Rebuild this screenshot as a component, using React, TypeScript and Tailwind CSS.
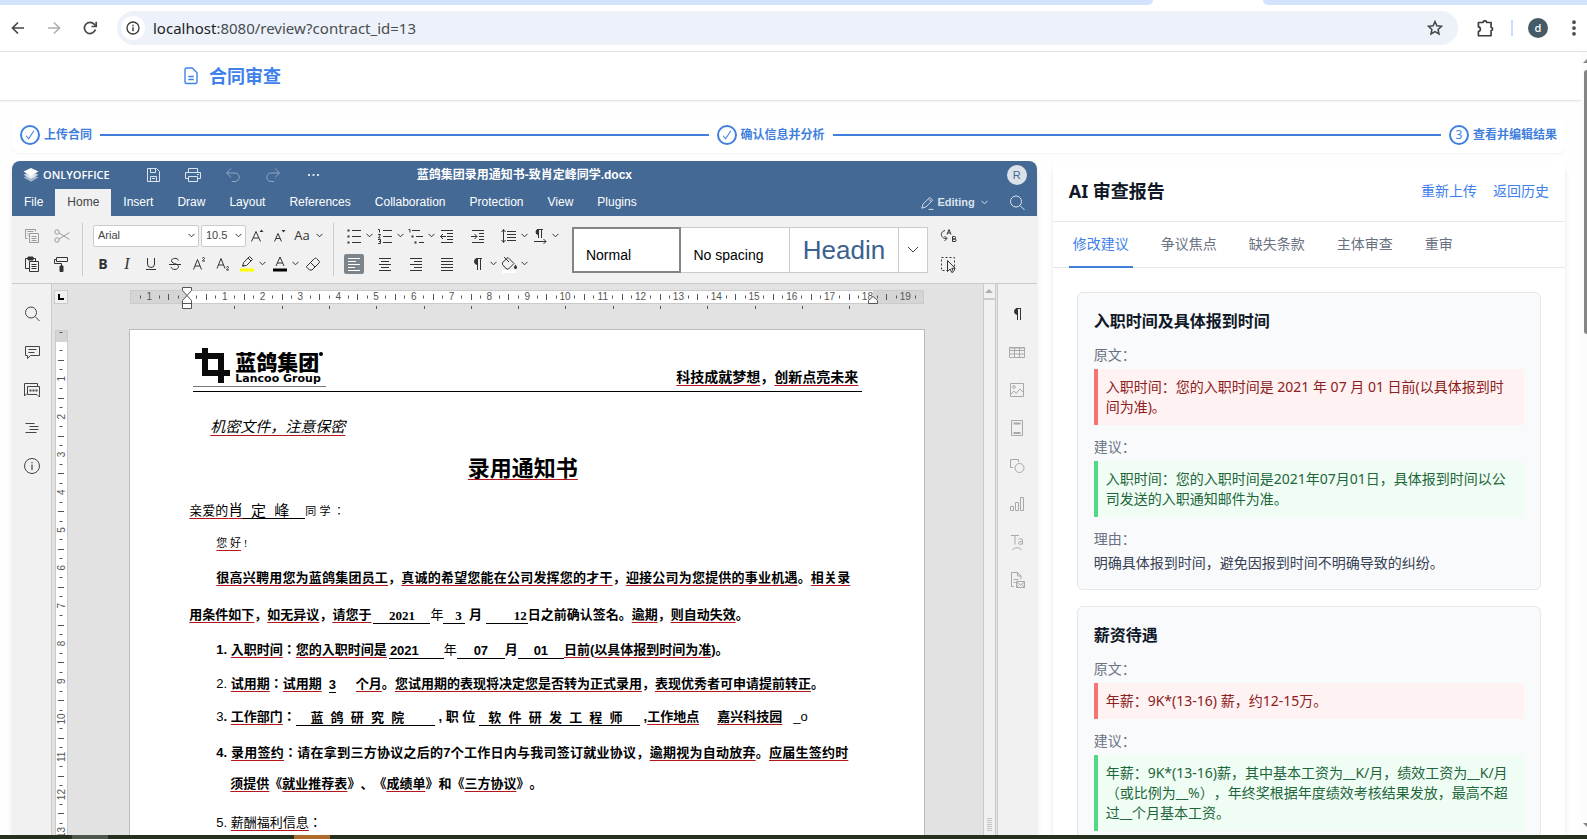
import type { ReactNode } from 'react';
import clsx from 'clsx';
import { MoreVertical } from 'lucide-react';

const UI_FONT = "font-['Noto_Sans','Noto_Sans_CJK_SC',sans-serif]";
const OFFICE_FONT = "font-['Liberation_Sans','Noto_Sans_CJK_SC',sans-serif]";

type IconProps = { children: ReactNode; className?: string; size?: number };

function Icon({ children, className, size = 20 }: IconProps) {
  return (
    <svg
      width={size}
      height={size}
      viewBox="0 0 20 20"
      fill="none"
      stroke="currentColor"
      strokeWidth="1"
      className={clsx('shrink-0', className)}
      aria-hidden="true"
    >
      {children}
    </svg>
  );
}

function Chevron() {
  return (
    <svg width="7" height="5" viewBox="0 0 7 5" fill="none" stroke="currentColor" aria-hidden="true">
      <path d="M.5.8l3 3 3-3" />
    </svg>
  );
}

/* ---------- browser chrome ---------- */

function BrowserBar() {
  return (
    <header className="border-b border-[#dfe1e5] bg-white">
      <div className="flex h-[5px]">
        <div className="flex-1 rounded-br-lg bg-[#d3e3fd]" />
        <div className="w-[110px]" />
        <div className="w-[324px] rounded-bl-lg bg-[#d3e3fd]" />
      </div>
      <div className="flex h-[46px] items-center pr-[3px] pl-2 text-[#474747]">
        <button type="button" aria-label="Back" className="flex w-5 justify-center">
          <Icon>
            <path d="M16 10H4.500M10 4.500L4.500 10l5.500 5.500" strokeWidth="1.700" />
          </Icon>
        </button>
        <button type="button" aria-label="Forward" className="ml-4 flex w-5 justify-center text-[#b0b0b0]">
          <Icon>
            <path d="M4 10h11.500M10 4.500l5.500 5.500-5.500 5.500" strokeWidth="1.700" />
          </Icon>
        </button>
        <button type="button" aria-label="Reload" className="mr-[17px] ml-4 flex w-5 justify-center">
          <Icon>
            <path d="M15.400 11.500A5.600 5.600 0 1 1 14.200 6.200l1.600 1.700" strokeWidth="1.700" />
            <path d="M16.200 3.800v4.700h-4.700" strokeWidth="1.700" />
          </Icon>
        </button>
        <div className="flex h-[34px] flex-1 items-center rounded-full bg-[#ecf1fa] px-1">
          <button type="button" aria-label="Site information" className="flex size-6 items-center justify-center rounded-full bg-white">
            <Icon size={16} className="text-[#3c3c3c]">
              <circle cx="10" cy="10" r="7.500" strokeWidth="1.700" />
              <path d="M10 9v5M10 6v1.800" strokeWidth="1.800" />
            </Icon>
          </button>
          <div className={clsx(UI_FONT, 'ml-2 flex-1 text-[15px] text-[#4a4d51]')}>
            <span className="text-[#1f1f1f]">localhost</span>:8080/review?contract_id=13
          </div>
          <button type="button" aria-label="Bookmark this page" className="mr-[9px]">
            <Icon className="text-[#444]">
              <path d="M10 3.600l1.900 4.200 4.600.5-3.400 3.100.9 4.600-4-2.300-4 2.300.9-4.600-3.400-3.100 4.600-.5z" strokeWidth="1.500" />
            </Icon>
          </button>
        </div>
        <button type="button" aria-label="Extensions" className="ml-4">
          <Icon size={22} className="text-[#3c3c3c]">
            <path
              d="M4 5h4.300c0-2 3.200-2 3.200 0H15.500v4.500c1.900 0 1.900 2.800 0 2.800V17H4v-3.800c2.400-.4 2.400-3.800 0-4.200z"
              strokeWidth="1.500"
              strokeLinejoin="round"
            />
          </Icon>
        </button>
        <span className="mx-[15px] h-4 w-0.5 bg-[#c9dcf9]" />
        <button type="button" className="flex size-5 items-center justify-center rounded-full bg-[#455a64] text-[11px] font-medium text-white">
          d
        </button>
        <button type="button" aria-label="Menu" className="ml-4">
          <MoreVertical size={20} strokeWidth={2.500} />
        </button>
      </div>
    </header>
  );
}

/* ---------- app header and steps ---------- */

function AppHeader() {
  return (
    <div className="flex h-[49px] items-center border-b border-[#e4e6ea] bg-white pl-[181px] shadow-xs">
      <Icon className="text-[#4080ea]">
        <path
          d="M5.500 2h5.800l4.700 4.700V16A1.500 1.500 0 0 1 14.500 17.500H5.500A1.500 1.500 0 0 1 4 16V3.500A1.500 1.500 0 0 1 5.500 2zM7.300 10.500h5.500M7.300 13.500h5.500"
          strokeWidth="1.400"
        />
      </Icon>
      <h1 className="ml-2 text-lg font-bold text-[#4080ea]">合同审查</h1>
    </div>
  );
}

function StepDot({ label, children }: { label: string; children: ReactNode }) {
  return (
    <li className="flex shrink-0 items-center gap-1">
      <span className="flex size-5 items-center justify-center rounded-full border-2 border-[#4080dc] text-xs">{children}</span>
      <span className="text-xs font-bold">{label}</span>
    </li>
  );
}

function Steps() {
  const check = (
    <Icon size={14}>
      <path d="M4.500 11l3.500 4.500L15.500 4" strokeWidth="1.500" />
    </Icon>
  );
  return (
    <ol className="mt-4 mb-2 flex h-9 items-center gap-2 rounded-lg bg-white px-2 text-[#4080dc] shadow-xs">
      <StepDot label="上传合同">{check}</StepDot>
      <li className="h-0.5 flex-1 bg-[#4080dc]" />
      <StepDot label="确认信息并分析">{check}</StepDot>
      <li className="h-0.5 flex-1 bg-[#4080dc]" />
      <StepDot label="查看并编辑结果">3</StepDot>
    </ol>
  );
}

/* ---------- editor: title bar and menu ---------- */

const MENU = ['File', 'Home', 'Insert', 'Draw', 'Layout', 'References', 'Collaboration', 'Protection', 'View', 'Plugins'];

function EditorTop() {
  return (
    <div className="bg-[#446995] text-white">
      <div className="grid h-7 grid-cols-[1fr_auto_1fr] items-center px-[10px]">
        <div className="flex items-center">
          <svg width="18" height="16" viewBox="0 0 18 16" aria-hidden="true">
            <path d="M9 7.200l7.500 3.300L9 14.800 1.500 10.500z" fill="#fff" fillOpacity=".5" />
            <path d="M9 4.600l7.500 3.200L9 11.800 1.500 7.800z" fill="#fff" fillOpacity=".75" />
            <path d="M9 1l7.500 3.600L9 8.800 1.500 4.600z" fill="#fff" />
          </svg>
          <span className="ml-[3px] w-[67px] font-['Open_Sans',sans-serif] text-[11px] font-semibold">ONLYOFFICE</span>
          <div className="ml-[33px] flex items-center gap-5 text-[#dbe3ee]">
            <button type="button" aria-label="Save">
              <Icon>
                <path d="M4.500 3.500h9l3 3v10h-12zM7.500 3.500v4h5v-4M7.500 16.500v-5h6v5M9 13.500h3" />
              </Icon>
            </button>
            <button type="button" aria-label="Print">
              <Icon>
                <path d="M5.500 7V3.500h9V7M5.500 13.500h-3V7.500h15v6h-3M5.500 11.500h9v5h-9zM14 9.500h2" />
              </Icon>
            </button>
            <button type="button" aria-label="Undo" className="opacity-50">
              <Icon>
                <path d="M8 3.500L3.500 8 8 12.500M4 8h8a4.200 4.200 0 0 1 0 8.500H9" />
              </Icon>
            </button>
            <button type="button" aria-label="Redo" className="opacity-50">
              <Icon>
                <path d="M12 3.500L16.500 8 12 12.500M16 8H8a4.200 4.200 0 0 0 0 8.500h3" />
              </Icon>
            </button>
            <button type="button" aria-label="More">
              <Icon>
                <path d="M5 10h2M9.500 10h2M14 10h2" strokeWidth="2" />
              </Icon>
            </button>
          </div>
        </div>
        <span className="text-xs font-bold">蓝鸽集团录用通知书-致肖定峰同学.docx</span>
        <span className="flex size-5 items-center justify-center justify-self-end rounded-full bg-[#dbe2ea] text-[11px] text-[#446995]">R</span>
      </div>
      <div className="flex h-[27px] text-xs">
        {MENU.map((item) => (
          <button
            key={item}
            type="button"
            className={clsx('px-3 pb-0.5', item === 'Home' ? 'bg-[#f1f1f1] text-[#444]' : 'font-medium text-white')}
          >
            {item}
          </button>
        ))}
        <div className="ml-auto flex items-center pr-[10px] text-[#dbe3ee]">
          <button type="button" className="flex items-center gap-0.5 text-[11px] font-bold">
            <Icon size={16}>
              <path d="M3.500 16.500l1.500-5L13.500 3l3.500 3.500-8.500 8.500zM12 5l3 3M12 18h6" strokeWidth="1.200" />
            </Icon>
            Editing
            <span className="ml-1">
              <Chevron />
            </span>
          </button>
          <button type="button" aria-label="Search" className="ml-[19px]">
            <Icon>
              <circle cx="9" cy="8.500" r="5.500" />
              <path d="M13 12.500l4.500 4.500" />
            </Icon>
          </button>
        </div>
      </div>
    </div>
  );
}

/* ---------- editor: toolbar ---------- */

type ToolProps = { label: string; children: ReactNode; menu?: boolean; wide?: boolean; active?: boolean; className?: string };

function Tool({ label, children, menu, wide, active, className }: ToolProps) {
  return (
    <span className={clsx('flex items-center', wide && 'pr-[11px]', className)}>
      <button
        type="button"
        aria-label={label}
        className={clsx('flex size-5 items-center justify-center rounded-xs', active && 'bg-[#7d858c] text-white')}
      >
        {children}
      </button>
      {menu && (
        <span className="flex w-[11px] justify-center">
          <Chevron />
        </span>
      )}
    </span>
  );
}

function FontTool({ label, children, className }: { label: string; children: ReactNode; className?: string }) {
  return (
    <button type="button" aria-label={label} className={clsx('flex h-5 items-center justify-center', className ?? 'w-6')}>
      {children}
    </button>
  );
}

function Picker({ label, value, className }: { label: string; value: string; className: string }) {
  return (
    <div className={clsx('relative', className)}>
      <select
        aria-label={label}
        defaultValue={value}
        className="block h-[22px] w-full appearance-none rounded-xs border border-[#cbcbcb] bg-white pl-1 text-[11px] text-[#444] outline-none"
      >
        <option>{value}</option>
      </select>
      <span className="pointer-events-none absolute inset-y-0 right-1 flex items-center">
        <Chevron />
      </span>
    </div>
  );
}

function Bar({ className }: { className?: string }) {
  return <span className={clsx('h-[53px] w-px shrink-0 bg-[#cbcbcb]', className)} />;
}

function Toolbar() {
  return (
    <div className="flex h-[68px] items-center border-b border-[#cbcbcb] bg-[#f1f1f1] pl-[10px] text-[#333]">
      <div className="grid grid-cols-[20px_20px] gap-x-[10px] gap-y-2">
        <Tool label="Copy">
          <Icon className="text-[#9a9a9a]">
            <path d="M5.500 12.500h-2v-9h10v2M5.500 5.500h6M5.500 7.500h1M5.500 9.500h1M7.500 7.500h9v9h-9zM9.500 10.500h5M9.500 12.500h5M9.500 14.500h5" />
          </Icon>
        </Tool>
        <Tool label="Cut">
          <Icon className="text-[#9a9a9a]">
            <circle cx="5" cy="6" r="2.200" />
            <circle cx="5" cy="14" r="2.200" />
            <path d="M7 7l10.500 6.500M7 13l10.500-6.500" />
          </Icon>
        </Tool>
        <Tool label="Paste">
          <Icon>
            <path d="M7 14.500H3.500v-10h10V7M7.500 7.500h9v10h-9zM9.500 10.500h5M9.500 12.500h5M9.500 14.500h5" />
            <path d="M6 3h5v3H6z" fill="currentColor" />
          </Icon>
        </Tool>
        <Tool label="Copy style">
          <Icon>
            <path d="M4.500 3.500h11v4h-11zM4.500 5.500h-2v4h7v3" />
            <path d="M8 12h3v5.500H8z" fill="currentColor" />
          </Icon>
        </Tool>
      </div>

      <Bar className="mr-[10px] ml-[10px]" />

      <div className="flex flex-col gap-2">
        <div className="flex h-5 items-center">
          <Picker label="Font" value="Arial" className="w-[106px]" />
          <Picker label="Font size" value="10.5" className="ml-0.5 w-[45px]" />
          <FontTool label="Increase font size" className="w-[22px]">
            <Icon>
              <path d="M4.500 15.500L9 5.500l4.500 10M6 12h6" />
              <path d="M12.500 6l2-2.500 2 2.500z" fill="currentColor" stroke="none" />
            </Icon>
          </FontTool>
          <FontTool label="Decrease font size" className="w-[22px]">
            <Icon>
              <path d="M5.500 15.500L9 7.500l3.500 8M6.800 12.500h4.500" />
              <path d="M12.500 4l2 2.500 2-2.500z" fill="currentColor" stroke="none" />
            </Icon>
          </FontTool>
          <FontTool label="Change case" className="w-6">
            <span className="font-['Open_Sans',sans-serif] text-[13px]">Aa</span>
          </FontTool>
          <span className="flex w-[11px] justify-center">
            <Chevron />
          </span>
        </div>
        <div className="-ml-0.5 flex h-5 items-center font-['Open_Sans',sans-serif] text-sm">
          <FontTool label="Bold">
            <b>B</b>
          </FontTool>
          <FontTool label="Italic">
            <i className="font-['Liberation_Serif',serif] text-base">I</i>
          </FontTool>
          <FontTool label="Underline">
            <Icon>
              <path d="M6.500 4v6a3.500 3.500 0 0 0 7 0V4M5 15.500h10" />
            </Icon>
          </FontTool>
          <FontTool label="Strikethrough">
            <Icon>
              <path d="M13.500 6.500c-.6-3-7-2.800-7 .3 0 2.200 3 2.500 4.500 3.200 1.800.8 2.500 1.500 2.500 2.700 0 3.500-6.800 3.700-7.500.3M4 10.500h12" />
            </Icon>
          </FontTool>
          <FontTool label="Superscript">
            <Icon>
              <path d="M4.500 15.500L8.500 5.500l4 10M6 12h5M13.500 4.500c0-1.300 2-1.300 2 0 0 .8-2 1.500-2 2.500H16" />
            </Icon>
          </FontTool>
          <FontTool label="Subscript">
            <Icon>
              <path d="M4 14.500L8 4.500l4 10M5.500 11h5M13.500 13.500c0-1.300 2-1.300 2 0 0 .8-2 1.500-2 2.500H16" />
            </Icon>
          </FontTool>
          <Tool label="Highlight color" menu className="ml-0.5">
            <Icon>
              <path d="M5.500 12l1.200-3.500L12.500 2.500l3 3L9.500 11.500zM11 4l3 3M5.500 12l2-.5" />
              <path d="M3 14.500h14V17.500H3z" fill="#ffff00" stroke="none" />
            </Icon>
          </Tool>
          <Tool label="Font color" menu className="ml-0.5">
            <Icon>
              <path d="M6 12L10 3l4 9M7.500 9h5" />
              <path d="M3 14.500h14V17.500H3z" fill="#000" stroke="none" />
            </Icon>
          </Tool>
          <Tool label="Clear style" className="ml-0.5">
            <Icon>
              <path d="M3.500 12.500L11.500 4.500c.6-.6 1.400-.6 2 0l2.500 2.500c.6.6.6 1.400 0 2L9 16H6.500l-3-3zM7.500 8.500l4.500 4.500" />
            </Icon>
          </Tool>
        </div>
      </div>

      <Bar className="mr-[10px] ml-2" />

      <div className="flex flex-col gap-2">
        <div className="flex h-5">
          <Tool label="Bullets" menu>
            <Icon>
              <path d="M8 4.500h9M8 10.500h9M8 16.500h9" />
              <path d="M3.500 3.500h2v2h-2zM3.500 9.500h2v2h-2zM3.500 15.500h2v2h-2z" fill="currentColor" stroke="none" />
            </Icon>
          </Tool>
          <Tool label="Numbering" menu>
            <Icon>
              <path d="M8 4.500h9M8 10.500h9M8 16.500h9M3 3.500h1.500v3M3 8.500h2.500L3.500 12h2M3 13.500h2.500v4H3M4 15.500h1.500" />
            </Icon>
          </Tool>
          <Tool label="Multilevel list" menu>
            <Icon>
              <path d="M6 4.500h8M10 10.500h7M13 16.500h5M2.500 3.500H4v3" />
              <path d="M5.500 9.500h2v2h-2zM8.500 15.500h2v2h-2z" fill="currentColor" stroke="none" />
            </Icon>
          </Tool>
          <Tool label="Decrease indent" wide>
            <Icon>
              <path d="M4 4.500h12M10 7.500h6M10 10.500h6M10 13.500h6M4 16.500h12M9 10.500H3.500M6 8l-2.500 2.500L6 13" />
            </Icon>
          </Tool>
          <Tool label="Increase indent" wide>
            <Icon>
              <path d="M4 4.500h12M11 7.500h5M11 10.500h5M11 13.500h5M4 16.500h12M3 10.500h6M6.500 8L9 10.500 6.500 13" />
            </Icon>
          </Tool>
          <Tool label="Line spacing" menu>
            <Icon>
              <path d="M8 5.500h9M8 8.500h9M8 11.500h9M8 14.500h9M4.500 4v12M2.500 6l2-2.500 2 2.500M2.500 14l2 2.500 2-2.500" />
            </Icon>
          </Tool>
          <Tool label="Text direction" menu>
            <Icon>
              <path d="M8.500 12V3.500M11.500 12V3.500M7 3.500h6M4 15.500h12M13.500 13l2.500 2.500L13.500 18" />
              <path d="M8.500 3.500a2.500 2.500 0 0 0 0 5z" fill="currentColor" />
            </Icon>
          </Tool>
        </div>
        <div className="flex h-5">
          <Tool label="Align left" wide active>
            <Icon>
              <path d="M4 4.500h12M4 7.500h8M4 10.500h12M4 13.500h7M4 16.500h12" />
            </Icon>
          </Tool>
          <Tool label="Align center" wide>
            <Icon>
              <path d="M4 4.500h12M6 7.500h8M4 10.500h12M6 13.500h8M4 16.500h12" />
            </Icon>
          </Tool>
          <Tool label="Align right" wide>
            <Icon>
              <path d="M4 4.500h12M8 7.500h8M4 10.500h12M8 13.500h8M4 16.500h12" />
            </Icon>
          </Tool>
          <Tool label="Justified" wide>
            <Icon>
              <path d="M4 4.500h12M4 7.500h12M4 10.500h12M4 13.500h12M4 16.500h12" />
            </Icon>
          </Tool>
          <Tool label="Nonprinting characters" menu>
            <Icon>
              <path d="M9.500 16V4.500M12.500 16V4.500M8 4.500h6" />
              <path d="M9.500 4.500a3 3 0 0 0 0 6z" fill="currentColor" />
            </Icon>
          </Tool>
          <Tool label="Shading" menu>
            <Icon>
              <path d="M3.500 8.500l5.500-5 6 6-5.500 5.500h-2l-4-4.500zM5 3l5 5" />
              <path d="M16.500 10.500c1 1.500 1.500 2 1.500 3a1.500 1.500 0 0 1-3 0c0-1 .5-1.500 1.500-3z" fill="currentColor" stroke="none" />
              <path d="M3 16h14v3H3z" fill="#fff" stroke="none" />
            </Icon>
          </Tool>
        </div>
      </div>

      <div className="ml-[11px] flex h-[46px] border border-[#cbcbcb] bg-white text-sm text-black">
        <button type="button" className="-m-px w-[109px] border-2 border-[#848484] pt-2.5 pr-9 text-center">
          Normal
        </button>
        <button type="button" className="w-[110px] border-r border-[#cbcbcb] pt-2.5 pr-3">
          No spacing
        </button>
        <button type="button" className="w-[109px] border-r border-[#cbcbcb] pt-0.5 text-[26px] text-[#3a6190]">
          Headin
        </button>
        <button type="button" aria-label="More styles" className="flex w-7 items-center justify-center text-[#444]">
          <svg width="12" height="7" viewBox="0 0 12 7" fill="none" stroke="currentColor" aria-hidden="true">
            <path d="M1 1l5 5 5-5" />
          </svg>
        </button>
      </div>

      <div className="ml-[10px] flex flex-col gap-2">
        <Tool label="Replace">
          <Icon>
            <path d="M7 4.500C3.500 5.500 2.500 8 4 10.500c.8 1.200 2 2 4.500 2M6.500 10l2.500 2.500L6.500 15" />
            <path d="M9 8.500L11 3.500l2 5M9.800 7h2.500" />
            <path d="M14.500 10.500h2c1.500 0 1.500 2.500 0 2.500h-2zM14.500 13h2.500c1.500 0 1.500 2.500 0 2.500h-2.500z" />
          </Icon>
        </Tool>
        <Tool label="Select all">
          <Icon>
            <path d="M3.500 3.500h13v13h-13z" strokeDasharray="2 2" />
            <path d="M9.500 6.500v11l2.500-2.500 1.800 3.500 1.700-.8-1.700-3.400h3.400z" fill="#f1f1f1" />
          </Icon>
        </Tool>
      </div>
    </div>
  );
}

/* ---------- editor: side panels ---------- */

const LEFT_PANEL = [
  {
    label: 'Find',
    icon: (
      <>
        <circle cx="9" cy="8.500" r="5.500" />
        <path d="M13 12.500l4.500 4.500" />
      </>
    ),
  },
  { label: 'Comments', icon: <path d="M3.500 4.500h14v9h-9l-3 3v-3h-2zM6.500 7.500h8M6.500 10.500h6" /> },
  {
    label: 'Chat',
    icon: (
      <>
        <path d="M5 13.500l-2.500 2.500V3.500h13V6M5.500 6.500h12v8H17.500v2.500l-2.500-2.500h-9.500z" />
        <path d="M7.500 10.500h2M10.500 10.500h2M13.500 10.500h2" strokeWidth="2" />
      </>
    ),
  },
  { label: 'Headings', icon: <path d="M3.500 5.500h9M7.500 8.500h9M7.500 11.500h9M3.500 14.500h11" /> },
  {
    label: 'About',
    icon: (
      <>
        <circle cx="10" cy="10" r="7.500" />
        <path d="M10 8.500V14M10 6v1.200" strokeWidth="1.200" />
      </>
    ),
  },
];

const RIGHT_PANEL = [
  {
    label: 'Paragraph settings',
    icon: (
      <g className="text-[#333]" stroke="currentColor">
        <path d="M10.500 16V4.500M13.500 16V4.500M9 4.500h5" />
        <path d="M10.500 4.500a3 3 0 0 0 0 6z" fill="currentColor" />
      </g>
    ),
  },
  {
    label: 'Table settings',
    icon: (
      <>
        <path d="M2.500 5.500h15v10h-15zM2.500 8.500h15M2.500 12h15M7.500 6v9.500M12.500 6v9.500" />
        <path d="M2.500 5h15v1.500h-15z" fill="currentColor" stroke="none" />
      </>
    ),
  },
  {
    label: 'Image settings',
    icon: (
      <>
        <path d="M3.500 3.500h13v13h-13zM4 14l3-3 2 2.500 4-4.500 3.500 3.500" />
        <circle cx="7" cy="7" r="1.300" />
      </>
    ),
  },
  {
    label: 'Header settings',
    icon: (
      <>
        <path d="M4.500 2.500h11v15h-11z" />
        <path d="M6.500 5.500h7M6.500 15h7" strokeWidth="2" />
      </>
    ),
  },
  {
    label: 'Shape settings',
    icon: (
      <>
        <path d="M6 11.500H3.500v-8h8v2.500" />
        <circle cx="12.500" cy="12" r="4.500" />
      </>
    ),
  },
  { label: 'Chart settings', icon: <path d="M3.500 12.500h3v4h-3zM8.500 8.500h3v8h-3zM13.500 3.500h3v13h-3z" /> },
  {
    label: 'Text Art settings',
    icon: (
      <path d="M4 3.500h8M8 3.500v9M11.500 7.500c1-1 4-1 4 .8v4.200M15.500 9.500c-1.500 0-4 0-4 1.600 0 1.900 3.500 1.600 4-.3M5.500 18c1.500-3 7.500-3 9 0" />
    ),
  },
  {
    label: 'Mail Merge',
    icon: <path d="M7 16.500H4.500v-14h6l3.500 3.500v3M10.500 2.500V6H14M6.500 9.500h5M6.500 12.500h2M9.500 11.500h8v6h-8zM9.500 12l4 3 4-3M9.500 17.500l2.500-3M17.500 17.500l-2.500-3" />,
  },
];

function SidePanel({ items, className }: { items: { label: string; icon: ReactNode }[]; className: string }) {
  return (
    <div className={clsx('flex w-10 shrink-0 flex-col gap-[18px] bg-[#f1f1f1] pt-5', className)}>
      {items.map((item) => (
        <button key={item.label} type="button" aria-label={item.label} className="flex h-5 justify-center">
          <Icon>{item.icon}</Icon>
        </button>
      ))}
    </div>
  );
}

/* ---------- editor: rulers ---------- */

function quarterTicks(from: number, to: number) {
  const ticks: number[] = [];
  for (let i = from; i <= to; i += 1) if (i % 4 !== 0) ticks.push(i);
  return ticks;
}

function HorizontalRuler() {
  const zero = 57;
  const step = 37.8;
  const stops = Array.from({ length: 14 }, (_, i) => zero + (i + 1) * 47.3);
  return (
    <svg width="794" height="24" viewBox="0 0 794 24" aria-hidden="true" className="shrink-0">
      <rect x="0.500" y="4.500" width="793" height="13" fill="#d5d5d5" stroke="#cbcbcb" />
      <rect x={zero} y="5" width="686" height="12" fill="#fff" />
      {quarterTicks(-5, 77).map((t) => {
        const x = Math.round(zero + (t * step) / 4) + 0.5;
        const half = t % 2 === 0 ? 3 : 1.5;
        return <path key={t} d={`M${x} ${11 - half}v${half * 2}`} stroke="#555" />;
      })}
      <text x={zero - step} y="14" textAnchor="middle" fontSize="10" fill="#555">
        1
      </text>
      {Array.from({ length: 19 }, (_, i) => i + 1).map((n) => (
        <text key={n} x={zero + n * step} y="14" textAnchor="middle" fontSize="10" fill="#555">
          {n}
        </text>
      ))}
      {stops.map((x) => (
        <path key={x} d={`M${Math.round(x) + 0.5} 20v3`} stroke="#555" />
      ))}
      <path d="M52.500 1.500h9v3l-4.500 5 4.500 5v8h-9v-8l4.500-5-4.500-5zM52.500 17.500h9" fill="#fff" stroke="#555" />
      <path d="M738.500 17.500v-3l4.500-4 4.500 4v3z" fill="#fff" stroke="#555" />
    </svg>
  );
}

function VerticalRuler() {
  const zero = 11;
  return (
    <svg width="13" height="520" viewBox="0 0 13 520" aria-hidden="true" className="shrink-0">
      <rect x="0.500" y="0.500" width="12" height="560" fill="#fff" stroke="#cbcbcb" />
      <rect x="1" y="1" width="11" height="11" fill="#d5d5d5" />
      {quarterTicks(-1, 54).map((t) => {
        const y = Math.round(zero + (t * 37.8) / 4) + 0.5;
        const half = t % 2 === 0 ? 3 : 1.5;
        return <path key={t} d={`M${6 - half} ${y}h${half * 2}`} stroke="#555" />;
      })}
      {Array.from({ length: 13 }, (_, i) => i + 1).map((n) => (
        <text key={n} transform={`translate(10 ${zero + n * 37.8}) rotate(-90)`} textAnchor="middle" fontSize="10" fill="#555">
          {n}
        </text>
      ))}
    </svg>
  );
}

/* ---------- document ---------- */

/** Run flagged by the spell checker. */
function Red({ children }: { children: ReactNode }) {
  return <span className="underline decoration-[#b3161b] decoration-1 underline-offset-3 [text-decoration-skip-ink:none]">{children}</span>;
}

/** Fill-in field on a black rule. */
function Blank({ children, className }: { children?: ReactNode; className: string }) {
  return (
    <span className={clsx('inline-block h-4 border-b border-black text-center align-middle leading-4 whitespace-pre', className)}>
      {children}
    </span>
  );
}

function Letterhead() {
  return (
    <div className="ml-1 flex h-[62px] items-end border-b border-black pb-1">
      <div className="flex w-[133px] gap-1 border-b border-[#777] pb-0.5 pl-0.5">
        <svg width="36" height="36" viewBox="0 0 36 36" aria-hidden="true">
          <path d="M7 0h6v27H7zM0 5h29v6H0zM23 5h6v30h-6zM7 22h28v6H7z" fill="#0a0a0a" />
        </svg>
        <div className="relative pt-1">
          <div className="text-[21px] leading-[22px] font-black">蓝鸽集团</div>
          <div className="font-['DejaVu_Sans',sans-serif] text-[11px] leading-[10px] font-bold whitespace-nowrap">Lancoo Group</div>
          <span className="absolute top-1 -right-0.5 size-1 rounded-full bg-black" />
        </div>
      </div>
      <div className="mr-1 ml-auto text-sm leading-5 font-bold">
        <Red>科技成就梦想</Red>，<Red>创新点亮未来</Red>
      </div>
    </div>
  );
}

function DocumentPage() {
  return (
    <article className="min-h-0 w-[796px] flex-1 overflow-hidden border border-b-0 border-[#bbb] bg-white pr-[62px] pl-[59px] font-['Liberation_Sans','Noto_Sans_CJK_JP',sans-serif] text-[13px] text-black [text-spacing-trim:space-all]">
      <Letterhead />
      <p className="mt-[19px] pl-[21px] text-[15px] leading-8 italic">
        <Red>机密文件，注意保密</Red>
      </p>
      <h2 className="mt-0.5 pr-1.5 text-center text-[22px] leading-[48px] font-bold">
        <Red>录用通知书</Red>
      </h2>
      <p className="mt-px leading-8">
        <Red>亲爱的</Red>
        <span className="text-[15px]">
          <Red>肖</Red>
          <Blank className="w-[62px]">定  峰  </Blank>
        </span>
        <span className="text-[11px]">同 学 ：</span>
      </p>
      <p className="pl-[27px] font-['Liberation_Serif','Noto_Sans_CJK_JP',serif] text-[11px] leading-8">
        <Red>您 好</Red> !
      </p>
      <p className="pr-[12px] text-justify indent-[27px] leading-[37px] font-bold">
        <Red>很高兴聘用您为蓝鸽集团员工</Red>，<Red>真诚的希望您能在公司发挥您的才干</Red>，<Red>迎接公司为您提供的事业机遇</Red>。
        <Red>相关录</Red>
        <Red>用条件如下</Red>，<Red>如无异议</Red>，<Red>请您于</Red>
        <Blank className="ml-0.5 w-[57px] indent-0 font-['Liberation_Serif',serif]">2021</Blank>
        <span className="font-normal">年</span>
        <Blank className="w-[22px] indent-0 pl-2 font-['Liberation_Serif',serif]">3</Blank> 月{' '}
        <Blank className="w-[42px] indent-0 pl-[27px] font-['Liberation_Serif',serif]">12</Blank>
        日之前确认签名。<Red>逾期</Red>，<Red>则自动失效</Red>。
      </p>
      <ol className="pr-[14px] pl-[27px] font-bold">
        <li className="leading-[34px]">
          1. <Red>入职时间</Red>：<Red>您的入职时间是</Red>
          <Blank className="ml-0.5 w-[55px] pr-6">2021</Blank>
          <span className="font-normal">年</span>
          <Blank className="w-12">07</Blank>月<Blank className="w-[46px]">01</Blank>
          <Red>日前</Red>(<Red>以具体报到时间为准</Red>)。
        </li>
        <li className="leading-[34px]">
          <span className="font-normal">2. </span>
          <Red>试用期</Red>：<Red>试用期</Red>
          <Blank className="mr-5 ml-[7px] w-[7px]">3</Blank>
          <Red>个月</Red>。<Red>您试用期的表现将决定您是否转为正式录用</Red>，<Red>表现优秀者可申请提前转正</Red>。
        </li>
        <li className="leading-8">
          <span className="font-normal">3</span>. <Red>工作部门</Red>：
          <Blank className="w-[139px] pr-4">蓝  鸽  研  究  院</Blank> , 职 位{' '}
          <Blank className="w-[161px] pr-2">软  件  研  发  工  程  师</Blank> ,<Red>工作地点</Red>
          <span className="ml-[18px]">
            <Red>嘉兴科技园</Red>
          </span>
          <span className="ml-[11px] font-normal">_o</span>
        </li>
        <li className="mt-1 pl-[14px] text-justify -indent-[14px] leading-[31px]">
          4. <Red>录用签约</Red>：请在拿到三方协议之后的7个工作日内与我司签订就业协议，<Red>逾期视为自动放弃</Red>。
          <Red>应届生签约时</Red>
          <Red>须提供</Red>《<Red>就业推荐表</Red>》、《<Red>成绩单</Red>》和《<Red>三方协议</Red>》。
        </li>
        <li className="mt-2 leading-8 font-normal">
          5. <Red>薪酬福利信息</Red>：
        </li>
      </ol>
    </article>
  );
}

function Editor() {
  return (
    <section className={clsx(OFFICE_FONT, 'flex min-w-0 flex-2 flex-col overflow-hidden rounded-t-lg shadow-md')}>
      <EditorTop />
      <Toolbar />
      <div className="flex min-h-0 flex-1 bg-[#e2e2e2]">
        <SidePanel items={LEFT_PANEL} className="border-r border-[#cbcbcb] text-[#444]" />
        <div className="flex w-4 shrink-0 flex-col items-end overflow-hidden">
          <div className="mt-[6px] mb-[26px] flex size-[14px] shrink-0 items-center justify-center border border-[#cbcbcb] bg-[#f1f1f1]">
            <span className="size-[6px] border-b-2 border-l-2 border-black" />
          </div>
          <VerticalRuler />
        </div>
        <div className="flex min-w-0 flex-1 flex-col items-center overflow-hidden pt-[2px] pl-1">
          <HorizontalRuler />
          <div className="h-[19px] shrink-0" />
          <DocumentPage />
        </div>
        <div className="flex w-[13px] shrink-0 flex-col border-x border-[#cbcbcb] bg-[#f1f1f1]">
          <div className="flex h-4 items-center justify-center border-b-2 border-[#cbcbcb]">
            <span className="border-x-4 border-b-4 border-x-transparent border-b-[#adadad]" />
          </div>
          <div className="mt-auto mb-1 flex flex-col items-center gap-px">
            {[0, 1, 2, 3, 4, 5, 6].map((n) => (
              <span key={n} className="h-px w-[5px] bg-[#c4c4c4]" />
            ))}
          </div>
        </div>
        <SidePanel items={RIGHT_PANEL} className="ml-px border-l border-[#cbcbcb] text-[#a8a8a8]" />
      </div>
    </section>
  );
}

/* ---------- review report ---------- */

const TABS = ['修改建议', '争议焦点', '缺失条款', '主体审查', '重审'];

const SUGGESTIONS = [
  {
    title: '入职时间及具体报到时间',
    original: '入职时间：您的入职时间是 2021 年 07 月 01 日前(以具体报到时间为准)。',
    suggestion: '入职时间：您的入职时间是2021年07月01日，具体报到时间以公司发送的入职通知邮件为准。',
    reason: '明确具体报到时间，避免因报到时间不明确导致的纠纷。',
  },
  {
    title: '薪资待遇',
    original: '年薪：9K*(13-16) 薪，约12-15万。',
    suggestion: '年薪：9K*(13-16)薪，其中基本工资为__K/月，绩效工资为__K/月（或比例为__%），年终奖根据年度绩效考核结果发放，最高不超过__个月基本工资。',
  },
];

function SuggestionCard({ title, original, suggestion, reason }: (typeof SUGGESTIONS)[number]) {
  return (
    <article className="shrink-0 rounded-md border border-gray-200 bg-[#f9fafc] p-4 text-sm [text-spacing-trim:space-all]">
      <h3 className="mb-3 text-base leading-6 font-semibold text-gray-900">{title}</h3>
      <p className="mb-1 text-gray-500">原文：</p>
      <p className="mb-3 border-l-4 border-[#f47474] bg-[#fef2f2] p-2 text-[#8c2020]">{original}</p>
      <p className="mb-1 text-gray-500">建议：</p>
      <p className="border-l-4 border-[#52d985] bg-[#f0fdf4] p-2 text-[#1c663a]">{suggestion}</p>
      {reason && (
        <>
          <p className="mt-3 mb-1 text-gray-500">理由：</p>
          <p className="text-gray-700">{reason}</p>
        </>
      )}
    </article>
  );
}

function ReportPanel() {
  return (
    <section className="flex min-w-0 flex-1 flex-col overflow-hidden rounded-t-lg bg-white shadow-md">
      <div className="flex h-[61px] shrink-0 items-center justify-between border-b border-gray-200 px-4">
        <h2 className="text-lg font-bold text-gray-900">AI 审查报告</h2>
        <nav className="flex gap-4 text-sm text-[#4080ea]">
          <a href="#upload">重新上传</a>
          <a href="#history">返回历史</a>
        </nav>
      </div>
      <div role="tablist" className="flex h-[46px] shrink-0 gap-6 border-b border-gray-200 px-4 text-sm">
        {TABS.map((tab, i) => (
          <button
            key={tab}
            type="button"
            role="tab"
            aria-selected={i === 0}
            className={clsx('-mb-px border-b-2 px-1', i === 0 ? 'border-[#4080dc] text-[#4080ea]' : 'border-transparent text-gray-500')}
          >
            {tab}
          </button>
        ))}
      </div>
      <div className="flex min-h-0 flex-1 flex-col gap-4 overflow-hidden p-6">
        {SUGGESTIONS.map((item) => (
          <SuggestionCard key={item.title} {...item} />
        ))}
      </div>
    </section>
  );
}

export default function App() {
  return (
    <div className={clsx(UI_FONT, 'flex h-screen flex-col overflow-hidden bg-white')}>
      <BrowserBar />
      <div className="flex min-h-0 flex-1">
        <main className="flex min-w-0 flex-1 flex-col bg-[#fefefe]">
          <AppHeader />
          <div className="flex min-h-0 flex-1 flex-col pr-4 pl-3">
            <Steps />
            <div className="flex min-h-0 flex-1 gap-4">
              <Editor />
              <ReportPanel />
            </div>
          </div>
        </main>
        <div className="flex w-[6px] flex-col items-end overflow-hidden bg-[#fcfcfc]">
          <span className="mt-[7px] border-b-4 border-l-4 border-b-[#858585] border-l-transparent" />
          <span className="mt-[7px] h-[264px] w-[3px] rounded-l bg-[#858585]" />
          <span className="mt-auto mb-2 border-t-4 border-l-4 border-t-[#858585] border-l-transparent" />
        </div>
      </div>
      <footer className="flex h-1 shrink-0 bg-[#243020] pl-[72px]">
        <span className="w-9 bg-[#4d574a]" />
        <span className="ml-[186px] w-9 bg-[#b06a2c]" />
      </footer>
    </div>
  );
}
